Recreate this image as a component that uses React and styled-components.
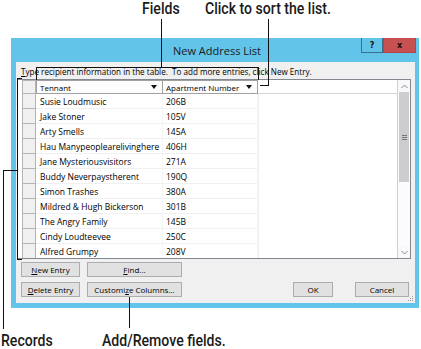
import React from "react";
import styled, { createGlobalStyle } from "styled-components";

const Global = createGlobalStyle`
  html, body { margin: 0; padding: 0; background: #fff; }
  body { font-family: "Open Sans", "Noto Sans", sans-serif; }
`;

const UI = `"Open Sans", "Noto Sans", sans-serif`;

const Page = styled.div`
  position: relative;
  width: 421px;
  height: 349px;
  overflow: hidden;
  background: #fff;
`;

const Dialog = styled.div`
  margin: 38px 0 0 11px;
  width: 408px;
  height: 270px;
  background: #62c4e9;
  display: flex;
  flex-direction: column;
`;

const TitleBar = styled.div`
  height: 24px;
  display: grid;
  grid-template-columns: 1fr auto 1fr;
  align-items: center;
`;

const Title = styled.div`
  grid-column: 2;
  font-family: ${UI};
  font-size: 11px;
  color: #1a1a1a;
  margin-left: 4px;
`;

const TitleButtons = styled.div`
  grid-column: 3;
  justify-self: end;
  align-self: start;
  display: flex;
  margin-right: 3px;
`;

const CaptionButton = styled.div`
  width: ${(p) => p.$w}px;
  height: 15px;
  box-sizing: border-box;
  background: ${(p) => (p.$close ? "#c75050" : "#62c4e9")};
  border: 1px solid ${(p) => (p.$close ? "#b24444" : "#3d6f8a")};
  border-top: none;
  display: flex;
  align-items: center;
  justify-content: center;
  font-family: "DejaVu Sans", sans-serif;
  font-weight: bold;
  font-size: 8px;
  color: #111;
`;

const Client = styled.div`
  position: relative;
  flex: 1;
  margin: 0 4px 5px 5px;
  background: #f0f0f0;
  display: flex;
  flex-direction: column;
`;

const Instruction = styled.div`
  height: 17px;
  box-sizing: border-box;
  padding: 2px 0 0 5px;
  line-height: 16px;
  font-family: ${UI};
  font-size: 8.1px;
  color: #000;
  white-space: pre;
  u { text-decoration: underline; }
`;

const Table = styled.div`
  margin: 0 4px 0 1px;
  height: 180px;
  box-sizing: border-box;
  border: 1px solid #828790;
  background: #fff;
  display: flex;
`;

const Grid = styled.div`
  flex: 1;
  overflow: hidden;
`;

const Row = styled.div`
  display: grid;
  grid-template-columns: 4px 14px 127px 95px 1fr;
  height: ${(p) => (p.$header ? 14 : 15)}px;
  font-family: ${UI};
  font-size: ${(p) => (p.$header ? 8 : 8.5)}px;
  color: #000;
`;

const RowHead = styled.div`
  grid-column: 2;
  box-sizing: border-box;
  background: #f0f0f0;
  border: 1px solid #b4b4b4;
  border-top: ${(p) => (p.$first ? "1px solid #b4b4b4" : "none")};
`;

const Cell = styled.div`
  box-sizing: border-box;
  border-bottom: 1px solid #f0f0f0;
  border-right: 1px solid #f4f4f4;
  padding-left: ${(p) => p.$pad}px;
  display: flex;
  align-items: center;
  white-space: nowrap;
  overflow: hidden;
`;

const Filler = styled.div`
  border-left: ${(p) => (p.$header ? "none" : "1px solid #f0f0f0")};
  border-bottom: ${(p) => (p.$header ? "1px solid #d5d5d5" : "none")};
`;

const HeadCell = styled.div`
  box-sizing: border-box;
  border: 1px solid #a0a0a0;
  border-left: ${(p) => (p.$first ? "1px solid #a0a0a0" : "none")};
  background: #fdfdfd;
  padding: 0 5px 0 3px;
  display: flex;
  align-items: center;
  justify-content: space-between;
`;

const Arrow = styled.span`
  width: 0;
  height: 0;
  border-left: 3.5px solid transparent;
  border-right: 3.5px solid transparent;
  border-top: 4px solid #111;
`;

const Scrollbar = styled.div`
  width: 12px;
  background: #fbfbfb;
  border-left: 1px solid #d0d0d0;
  display: flex;
  flex-direction: column;
`;

const ScrollArrow = styled.div`
  height: 12px;
  display: flex;
  align-items: center;
  justify-content: center;
  background: #f8f8f8;
`;

const Thumb = styled.div`
  height: 90px;
  background: #cdcdcd;
  margin: 0 1px;
  display: flex;
  align-items: center;
  justify-content: center;
`;

const Track = styled.div`
  flex: 1;
`;

const Footer = styled.div`
  flex: 1;
  display: flex;
  justify-content: space-between;
  align-items: flex-start;
  padding: 3px 6px 0 5px;
`;

const LeftButtons = styled.div`
  display: grid;
  grid-template-columns: 59px 95px;
  column-gap: 7px;
  row-gap: 5px;
`;

const RightButtons = styled.div`
  display: flex;
  gap: 22px;
  margin-top: 20px;
`;

const Button = styled.div`
  width: ${(p) => (p.$w ? `${p.$w}px` : "auto")};
  height: 15px;
  box-sizing: border-box;
  background: #e1e1e1;
  border: 1px solid #adadad;
  display: flex;
  align-items: center;
  justify-content: center;
  font-family: ${UI};
  font-size: 8px;
  color: #000;
  u { text-decoration: underline; }
`;

const Grip = styled.svg`
  position: absolute;
  right: 1px;
  bottom: 1px;
`;

/* ---- annotations (callouts lying over the screenshot) ---- */
const Label = styled.div`
  position: absolute;
  top: ${(p) => p.$top}px;
  left: ${(p) => p.$left}px;
  font-family: Roboto, "Liberation Sans", sans-serif;
  font-weight: 500;
  font-size: 16px;
  line-height: 17px;
  color: #1a1a1a;
  white-space: nowrap;
  transform: scaleX(0.88);
  transform-origin: left top;
`;

const FieldsStem = styled.div`
  position: absolute;
  left: 161px;
  top: 19px;
  height: 48px;
  border-left: 1px solid #111;
`;

const FieldsBracket = styled.div`
  position: absolute;
  left: 36px;
  top: 67px;
  width: 221px;
  height: 12px;
  border: 1px solid #111;
  border-bottom: none;
`;

const SortPointer = styled.div`
  position: absolute;
  left: 260px;
  top: 19px;
  width: 8px;
  height: 66px;
  border-right: 1px solid #111;
  border-bottom: 1px solid #111;
`;

const RecordsBracket = styled.div`
  position: absolute;
  left: 17px;
  top: 78px;
  width: 4px;
  height: 180px;
  border: 1px solid #111;
  border-right: none;
`;

const RecordsLeader = styled.div`
  position: absolute;
  left: 3px;
  top: 170px;
  width: 14px;
  height: 158px;
  border-top: 1px solid #111;
  border-left: 1px solid #111;
`;

const ColumnsLeader = styled.div`
  position: absolute;
  left: 129px;
  top: 297px;
  height: 31px;
  border-left: 1px solid #111;
`;

const records = [
  ["Susie Loudmusic", "206B"],
  ["Jake Stoner", "105V"],
  ["Arty Smells", "145A"],
  ["Hau Manypeoplearelivinghere", "406H"],
  ["Jane Mysteriousvisitors", "271A"],
  ["Buddy Neverpaystherent", "190Q"],
  ["Simon Trashes", "380A"],
  ["Mildred & Hugh Bickerson", "301B"],
  ["The Angry Family", "145B"],
  ["Cindy Loudteevee", "250C"],
  ["Alfred Grumpy", "208V"],
  ["", ""],
];

const Chevron = ({ up }) => (
  <svg width="7" height="5" viewBox="0 0 7 5">
    <path
      d={up ? "M0.5 4 L3.5 1 L6.5 4" : "M0.5 1 L3.5 4 L6.5 1"}
      fill="none"
      stroke="#888"
      strokeWidth="1"
    />
  </svg>
);

export default function App() {
  return (
    <Page>
      <Global />
      <Dialog>
        <TitleBar>
          <Title>New Address List</Title>
          <TitleButtons>
            <CaptionButton $w={22}>?</CaptionButton>
            <CaptionButton $w={33} $close>x</CaptionButton>
          </TitleButtons>
        </TitleBar>
        <Client>
          <Instruction>
            <u>T</u>ype recipient information in the table.  To add more entries, click New Entry.
          </Instruction>
          <Table>
            <Grid>
              <Row $header>
                <RowHead $first />
                <HeadCell $first>
                  Tennant <Arrow />
                </HeadCell>
                <HeadCell>
                  Apartment Number <Arrow />
                </HeadCell>
                <Filler $header />
              </Row>
              {records.map(([name, apt], i) => (
                <Row key={i}>
                  <RowHead />
                  <Cell $pad={4}>{name}</Cell>
                  <Cell $pad={3}>{apt}</Cell>
                  <Filler />
                </Row>
              ))}
            </Grid>
            <Scrollbar>
              <ScrollArrow>
                <Chevron up />
              </ScrollArrow>
              <Thumb>
                <svg width="5" height="5" viewBox="0 0 5 5">
                  <path d="M0 0.5H5M0 2.5H5M0 4.5H5" stroke="#777" strokeWidth="1" />
                </svg>
              </Thumb>
              <Track />
              <ScrollArrow>
                <Chevron />
              </ScrollArrow>
            </Scrollbar>
          </Table>
          <Footer>
            <LeftButtons>
              <Button>
                <span><u>N</u>ew Entry</span>
              </Button>
              <Button>
                <span><u>F</u>ind...</span>
              </Button>
              <Button>
                <span><u>D</u>elete Entry</span>
              </Button>
              <Button>
                <span>Customi<u>z</u>e Columns...</span>
              </Button>
            </LeftButtons>
            <RightButtons>
              <Button $w={40}>OK</Button>
              <Button $w={54}>Cancel</Button>
            </RightButtons>
          </Footer>
          <Grip width="7" height="7" viewBox="0 0 7 7">
            <g fill="#9a9a9a">
              <rect x="5" y="1" width="1" height="1" />
              <rect x="3" y="3" width="1" height="1" />
              <rect x="5" y="3" width="1" height="1" />
              <rect x="1" y="5" width="1" height="1" />
              <rect x="3" y="5" width="1" height="1" />
              <rect x="5" y="5" width="1" height="1" />
            </g>
          </Grip>
        </Client>
      </Dialog>

      <Label $top={0} $left={142}>Fields</Label>
      <Label $top={0} $left={205}>Click to sort the list.</Label>
      <Label $top={332} $left={1}>Records</Label>
      <Label $top={332} $left={102}>Add/Remove fields.</Label>
      <FieldsStem />
      <FieldsBracket />
      <SortPointer />
      <RecordsBracket />
      <RecordsLeader />
      <ColumnsLeader />
    </Page>
  );
}
